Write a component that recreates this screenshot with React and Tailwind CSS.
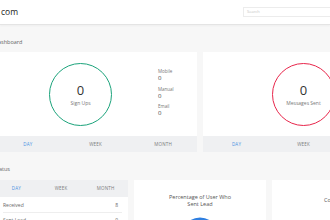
import React from "react";

function Tabs({ h = "h-[16px]" }) {
  return (
    <div className={`grid grid-cols-3 ${h} items-center bg-[#eff0f2] text-[4.5px] tracking-[0.2px]`}>
      <div className="text-center text-[#4a90e2]">DAY</div>
      <div className="text-center text-[#7a7a7a]">WEEK</div>
      <div className="text-center text-[#7a7a7a]">MONTH</div>
    </div>
  );
}

function Stat({ label }) {
  return (
    <div className="flex flex-col">
      <span className="text-[4.5px] leading-[6px] text-[#777]">{label}</span>
      <span className="text-[6px] leading-[8px] text-[#444]">0</span>
    </div>
  );
}

export default function App() {
  return (
    <div className="w-[330px] h-[220px] overflow-hidden bg-[#f7f7f7] font-['Open_Sans',sans-serif]">
      <header className="flex h-[25px] items-center justify-between border-b border-[#e4e4e4] bg-white shadow-[0_1px_2px_rgba(0,0,0,0.04)]">
        <span className="pl-[1px] text-[8.5px] text-[#222]">com</span>
        <div className="mr-[-20px] flex h-[10px] w-[107px] items-center border border-[#ececec] bg-white px-[3px] text-[4px] text-[#c4c4c4]">
          Search
        </div>
      </header>

      <div className="ml-[-6px] w-[420px]">
        <div className="pt-[13px] text-[5.5px] leading-[8px] text-[#666]">Dashboard</div>

        <div className="mt-[6px] flex gap-[6px]">
          <div className="flex w-[203px] flex-col bg-white">
            <div className="flex h-[84px] items-center">
              <div className="ml-[55px] flex h-[63px] w-[63px] flex-col items-center justify-center rounded-full border-[1.5px] border-[#1ba37b]">
                <span className="text-[13px] leading-[15px] text-[#333]">0</span>
                <span className="mt-[2px] text-[5px] leading-[6px] text-[#777]">Sign Ups</span>
              </div>
              <div className="mb-[3px] ml-[46px] flex flex-col gap-[3.5px]">
                <Stat label="Mobile" />
                <Stat label="Manual" />
                <Stat label="Email" />
              </div>
            </div>
            <Tabs />
          </div>

          <div className="flex w-[201px] flex-col bg-white">
            <div className="flex h-[84px] items-center justify-center">
              <div className="flex h-[63px] w-[63px] flex-col items-center justify-center rounded-full border-[1.5px] border-[#e8264b]">
                <span className="text-[13px] leading-[15px] text-[#333]">0</span>
                <span className="mt-[2px] text-[5px] leading-[6px] text-[#777]">Messages Sent</span>
              </div>
            </div>
            <Tabs />
          </div>
        </div>

        <div className="mt-[13px] text-[5.5px] leading-[8px] text-[#666]">Status</div>

        <div className="mt-[7px] flex items-start gap-[6px]">
          <div className="w-[134px] bg-white">
            <Tabs h="h-[17px]" />
            <div className="pl-[9px] pr-[6px]">
              <div className="flex h-[16px] items-center justify-between border-b border-[#eeeeee] pt-[2px] text-[5px] text-[#666]">
                <span>Received</span>
                <span className="pr-[4px]">8</span>
              </div>
              <div className="flex h-[16px] items-center justify-between text-[5px] text-[#666]">
                <span>Sent Lead</span>
                <span className="pr-[4px]">0</span>
              </div>
            </div>
          </div>

          <div className="flex h-[60px] w-[132px] flex-col items-center bg-white pt-[14px]">
            <div className="text-center text-[5.5px] leading-[7px] text-[#555]">
              Percentage of User Who
              <br />
              Sent Lead
            </div>
            <svg className="mt-[8px] shrink-0" width="40" height="40" viewBox="0 0 40 40">
              <circle cx="20" cy="20" r="16" fill="none" stroke="#2f7fe0" strokeWidth="5" />
            </svg>
          </div>

          <div className="flex h-[60px] w-[133px] flex-col items-center bg-white pt-[17px]">
            <div className="text-center text-[5.5px] leading-[7px] text-[#555]">
              Conversion
              <br />
              Rate
            </div>
          </div>
        </div>
      </div>
    </div>
  );
}
